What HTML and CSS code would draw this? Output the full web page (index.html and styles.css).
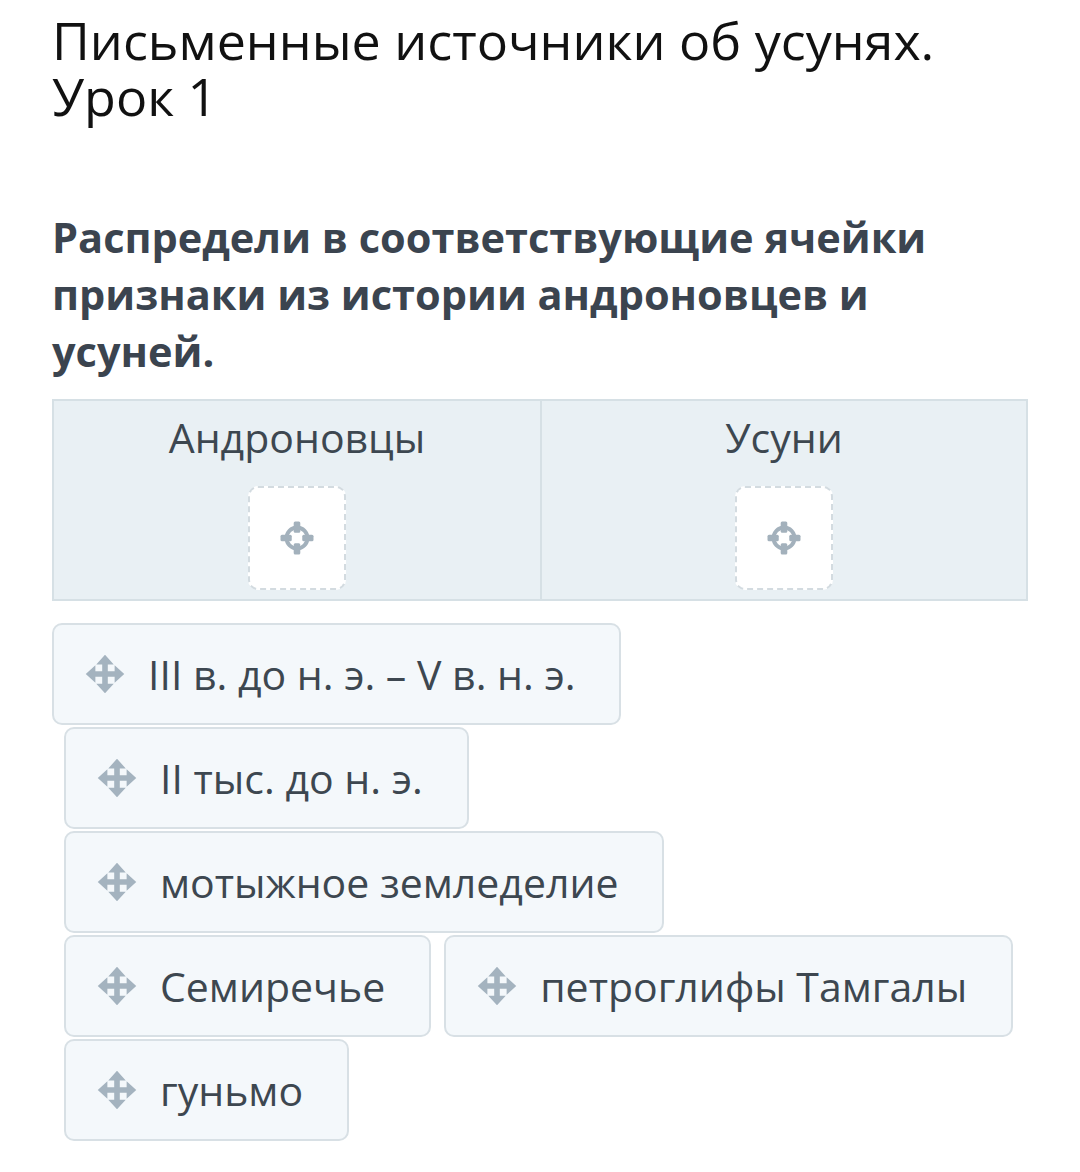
FILE: index.html
```html
<!DOCTYPE html>
<html lang="ru">
<head>
    <meta charset="UTF-8">
    <meta name="viewport" content="width=device-width, initial-scale=1.0">
    <title>Письменные источники об усунях</title>
    <link rel="stylesheet" href="styles.css">
</head>
<body>
    <div class="lesson">
        <h1 class="lesson-title">Письменные источники об усунях. Урок 1</h1>
        <p class="task">Распредели в соответствующие ячейки признаки из истории андроновцев и усуней.</p>

        <div class="board">
            <div class="column">
                <div class="column-title">Андроновцы</div>
                <div class="drop-slot">
                    <svg class="target-icon" viewBox="0 0 24 24">
                        <circle cx="12" cy="12" r="7" fill="none" stroke="#a3b1bc" stroke-width="2.6"/>
                        <rect x="9.8" y="1" width="4.4" height="7.5" rx="1" fill="#a3b1bc"/>
                        <rect x="9.8" y="15.5" width="4.4" height="7.5" rx="1" fill="#a3b1bc"/>
                        <rect x="1" y="9.8" width="7.5" height="4.4" rx="1" fill="#a3b1bc"/>
                        <rect x="15.5" y="9.8" width="7.5" height="4.4" rx="1" fill="#a3b1bc"/>
                    </svg>
                </div>
            </div>
            <div class="column">
                <div class="column-title">Усуни</div>
                <div class="drop-slot">
                    <svg class="target-icon" viewBox="0 0 24 24">
                        <circle cx="12" cy="12" r="7" fill="none" stroke="#a3b1bc" stroke-width="2.6"/>
                        <rect x="9.8" y="1" width="4.4" height="7.5" rx="1" fill="#a3b1bc"/>
                        <rect x="9.8" y="15.5" width="4.4" height="7.5" rx="1" fill="#a3b1bc"/>
                        <rect x="1" y="9.8" width="7.5" height="4.4" rx="1" fill="#a3b1bc"/>
                        <rect x="15.5" y="9.8" width="7.5" height="4.4" rx="1" fill="#a3b1bc"/>
                    </svg>
                </div>
            </div>
        </div>

        <div class="cards">
            <div class="card-row">
                <div class="card">
                    <svg class="move-icon" viewBox="0 0 24 24"><path d="M12 1 L17 6.5 H13.6 V10.4 H17.5 V7 L23 12 L17.5 17 V13.6 H13.6 V17.5 H17 L12 23 L7 17.5 H10.4 V13.6 H6.5 V17 L1 12 L6.5 7 V10.4 H10.4 V6.5 H7 Z"/></svg>
                    <span>III в. до н. э. – V в. н. э.</span>
                </div>
            </div>
            <div class="card-row">
                <div class="card">
                    <svg class="move-icon" viewBox="0 0 24 24"><path d="M12 1 L17 6.5 H13.6 V10.4 H17.5 V7 L23 12 L17.5 17 V13.6 H13.6 V17.5 H17 L12 23 L7 17.5 H10.4 V13.6 H6.5 V17 L1 12 L6.5 7 V10.4 H10.4 V6.5 H7 Z"/></svg>
                    <span>II тыс. до н. э.</span>
                </div>
            </div>
            <div class="card-row">
                <div class="card">
                    <svg class="move-icon" viewBox="0 0 24 24"><path d="M12 1 L17 6.5 H13.6 V10.4 H17.5 V7 L23 12 L17.5 17 V13.6 H13.6 V17.5 H17 L12 23 L7 17.5 H10.4 V13.6 H6.5 V17 L1 12 L6.5 7 V10.4 H10.4 V6.5 H7 Z"/></svg>
                    <span>мотыжное земледелие</span>
                </div>
            </div>
            <div class="card-row">
                <div class="card">
                    <svg class="move-icon" viewBox="0 0 24 24"><path d="M12 1 L17 6.5 H13.6 V10.4 H17.5 V7 L23 12 L17.5 17 V13.6 H13.6 V17.5 H17 L12 23 L7 17.5 H10.4 V13.6 H6.5 V17 L1 12 L6.5 7 V10.4 H10.4 V6.5 H7 Z"/></svg>
                    <span>Семиречье</span>
                </div>
                <div class="card">
                    <svg class="move-icon" viewBox="0 0 24 24"><path d="M12 1 L17 6.5 H13.6 V10.4 H17.5 V7 L23 12 L17.5 17 V13.6 H13.6 V17.5 H17 L12 23 L7 17.5 H10.4 V13.6 H6.5 V17 L1 12 L6.5 7 V10.4 H10.4 V6.5 H7 Z"/></svg>
                    <span>петроглифы Тамгалы</span>
                </div>
            </div>
            <div class="card-row">
                <div class="card">
                    <svg class="move-icon" viewBox="0 0 24 24"><path d="M12 1 L17 6.5 H13.6 V10.4 H17.5 V7 L23 12 L17.5 17 V13.6 H13.6 V17.5 H17 L12 23 L7 17.5 H10.4 V13.6 H6.5 V17 L1 12 L6.5 7 V10.4 H10.4 V6.5 H7 Z"/></svg>
                    <span>гуньмо</span>
                </div>
            </div>
        </div>
    </div>
</body>
</html>
```

FILE: styles.css
```css
body {
    font-family: 'Open Sans', 'Noto Sans', sans-serif;
    margin: 0;
    background: #ffffff;
    color: #3b444f;
}

.lesson {
    padding: 12px 52px 0 52px;
}

.lesson-title {
    font-weight: normal;
    font-size: 52px;
    line-height: 56px;
    color: #111111;
    margin: 0;
    width: 940px;
}

.task {
    font-weight: bold;
    font-size: 41.5px;
    line-height: 57px;
    margin: 85px 0 19px 0;
    width: 920px;
}

.board {
    display: grid;
    grid-template-columns: 1fr 1fr;
    border: 2px solid #d6e0e5;
    background: #e9f0f4;
    width: 972px;
}

.column {
    display: flex;
    flex-direction: column;
    align-items: center;
    height: 198px;
}

.column + .column {
    border-left: 2px solid #d6e0e5;
}

.column-title {
    font-size: 41px;
    line-height: 44px;
    margin-top: 14px;
    color: #3d4750;
}

.drop-slot {
    width: 94px;
    height: 100px;
    margin-top: 27px;
    background: #ffffff;
    border: 2px dashed #d3dbe0;
    border-radius: 10px;
    display: flex;
    align-items: center;
    justify-content: center;
}

.target-icon {
    width: 36px;
    height: 36px;
}

.cards {
    display: flex;
    flex-direction: column;
    gap: 2px;
    margin-top: 22px;
}

.card-row {
    display: flex;
    gap: 13px;
    margin-left: 12px;
}

.card-row:first-child {
    margin-left: 0;
}

.card {
    display: flex;
    align-items: center;
    gap: 22px;
    height: 98px;
    padding: 0 44px 0 30px;
    background: #f4f8fb;
    border: 2px solid #d8e0e5;
    border-radius: 10px;
    font-size: 41px;
    color: #3d4750;
    white-space: nowrap;
}

.move-icon {
    width: 42px;
    height: 42px;
    fill: #a4b3bf;
    flex-shrink: 0;
}
```
